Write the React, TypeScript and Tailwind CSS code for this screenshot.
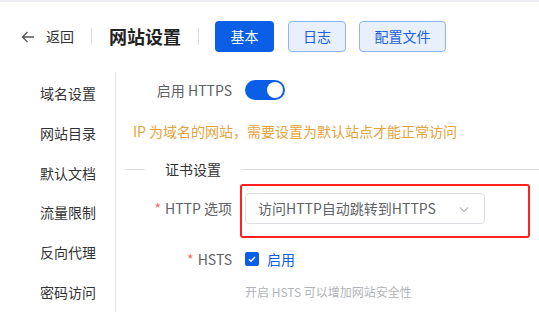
import React from "react";

const font = { fontFamily: '"Noto Sans CJK SC", "Noto Sans", sans-serif' };

export default function App() {
  const side = ["域名设置", "网站目录", "默认文档", "流量限制", "反向代理", "密码访问"];
  return (
    <div className="w-[539px] h-[312px] bg-white overflow-hidden relative" style={font}>
      <div className="h-[2px] bg-[#eceef3]" />
      <div className="flex items-center h-[70px] pb-[1px]">
        <div className="flex items-center ml-[21px] text-[14px] text-[#333]">
          <svg width="14" height="14" viewBox="0 0 14 14" className="mr-[11px]">
            <path d="M13 7H1.5M6.5 2L1.5 7l5 5" fill="none" stroke="#555" strokeWidth="1.3" />
          </svg>
          <span>返回</span>
        </div>
        <div className="w-px h-[17px] bg-[#dcdfe6] ml-[17px]" />
        <div className="ml-[17px] text-[18px] font-bold text-[#222]">网站设置</div>
        <div className="w-px h-[17px] bg-[#dcdfe6] ml-[17px]" />
        <button className="ml-[16px] w-[59px] h-[31px] rounded-[4px] bg-[#0a5fe6] text-white text-[14px]">基本</button>
        <button className="ml-[14px] w-[58px] h-[31px] rounded-[4px] bg-[#e8f0fd] border border-[#8db4f4] text-[#1d5fdd] text-[14px]">日志</button>
        <button className="ml-[13px] w-[87px] h-[31px] rounded-[4px] bg-[#e8f0fd] border border-[#8db4f4] text-[#1d5fdd] text-[14px]">配置文件</button>
      </div>
      <div className="flex">
        <div className="w-[116px] border-r border-[#e4e7ed] h-[260px] pt-[1px]">
          {side.map((s, i) => (
            <div key={s} className={`h-[40px] flex items-center pl-[40px] text-[14px] text-[#333] ${i === 3 ? "-mt-[1px]" : ""}`}>
              {s}
            </div>
          ))}
        </div>
        <div className="flex-1 flex flex-col">
          <div className="flex items-center h-[40px] mt-[-2px]">
            <div className="w-[116px] text-right text-[14px] text-[#606266]">启用 HTTPS</div>
            <div className="ml-[13px] w-[40px] h-[20px] rounded-full bg-[#0a5fe6] relative">
              <div className="absolute right-[2px] top-[2px] w-[16px] h-[16px] rounded-full bg-white" />
            </div>
          </div>
          <div className="ml-[17px] mt-[11px] h-[20px] flex items-center text-[14px] text-[#e6a23c]">
            IP 为域名的网站，需要设置为默认站点才能正常访问
          </div>
          <div className="flex items-center ml-[9px] mt-[18px] h-[20px]">
            <div className="w-[20px] h-px bg-[#dcdfe6]" />
            <div className="px-[20px] text-[14px] text-[#333]">证书设置</div>
            <div className="flex-1 h-px bg-[#dcdfe6]" />
          </div>
          <div className="flex items-center mt-[14px] h-[31px]">
            <div className="w-[116px] text-right text-[14px] text-[#606266]">
              <span className="text-[#f56c6c] mr-[4px]">*</span>HTTP 选项
            </div>
            <div className="ml-[13px] relative">
              <div className="w-[240px] h-[31px] border border-[#dcdfe6] rounded-[4px] flex items-center justify-between pl-[12px] pr-[14px] text-[14px] text-[#606266]">
                <span>访问HTTP自动跳转到HTTPS</span>
                <svg width="12" height="12" viewBox="0 0 12 12">
                  <path d="M2 4.5l4 4 4-4" fill="none" stroke="#b4b7bd" strokeWidth="1.2" />
                </svg>
              </div>
              <div className="absolute left-[-5px] top-[-9px] w-[290px] h-[54px] border-2 border-[#ff2020] rounded-[3px]" />
            </div>
          </div>
          <div className="flex items-center mt-[25px] h-[20px]">
            <div className="w-[116px] text-right text-[14px] text-[#606266]">
              <span className="text-[#f56c6c] mr-[4px]">*</span>HSTS
            </div>
            <div className="ml-[13px] w-[14px] h-[14px] rounded-[2px] bg-[#0a5fe6] flex items-center justify-center">
              <svg width="10" height="10" viewBox="0 0 10 10">
                <path d="M2 5.2l2 2 4-4.2" fill="none" stroke="white" strokeWidth="1.4" />
              </svg>
            </div>
            <span className="ml-[8px] text-[14px] text-[#0a5fe6]">启用</span>
          </div>
          <div className="ml-[129px] mt-[14px] text-[12px] text-[#b1b4ba]">开启 HSTS 可以增加网站安全性</div>
        </div>
      </div>
    </div>
  );
}
